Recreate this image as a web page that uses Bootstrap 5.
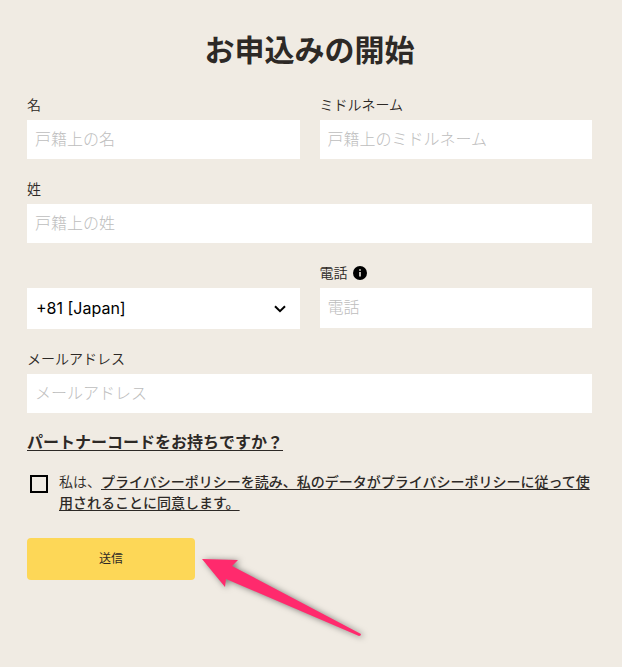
<!DOCTYPE html>
<html lang="ja">
<head>
<meta charset="utf-8">
<meta name="viewport" content="width=device-width, initial-scale=1">
<title>お申込みの開始</title>
<link href="https://cdn.jsdelivr.net/npm/bootstrap@5.3.0/dist/css/bootstrap.min.css" rel="stylesheet">
<style>
  body {
    background: #f0ebe3;
    color: #2d2926;
    font-family: "Noto Sans CJK JP", sans-serif;
    font-size: 14px;
    font-weight: 350;
    line-height: 20px;
  }
  .signup { padding: 30px 30px 80px 27px; }
  .signup h1 { font-size: 30px; line-height: 36px; margin-bottom: 29px; }
  .signup .row { --bs-gutter-x: 20px; --bs-gutter-y: 20px; }
  .form-label { display: flex; align-items: flex-start; gap: 5px; height: 20px; line-height: 18px; margin-bottom: 5px; }
  .signup .form-control, .signup .form-select {
    border: 0;
    border-radius: 0;
    background-color: #fff;
    font-size: 16px;
    font-weight: 300;
    line-height: 24px;
    height: 39px;
    padding: 5px 8px 9px;
  }
  .signup .form-control.tel { height: 40px; }
  .signup .form-control::placeholder { color: #bdbdbd; }
  .signup .form-select {
    height: 41px;
    padding: 7px 32px 9px 9px;
    color: #000;
    font-family: Inter, sans-serif;
    font-weight: 400;
    background-image: url("data:image/svg+xml,%3Csvg xmlns='http://www.w3.org/2000/svg' viewBox='0 0 12 8'%3E%3Cpath d='M1 1.2 6 6.2l5-5' fill='none' stroke='%23000' stroke-width='2'/%3E%3C/svg%3E");
    background-size: 12px 8px;
    background-position: right 14px center;
  }
  .info { width: 14px; height: 14px; border: 0; padding: 0; margin-top: 3px; background: none; display: flex; }
  .signup a { color: inherit; text-underline-offset: 2px; }
  .partner { font-size: 16px; line-height: 24px; margin: 16px 0 18px; }
  .consent { display: flex; gap: 11px; line-height: 21px; padding-left: 3px; margin-bottom: 25px; }
  .consent .form-check-input {
    width: 18px; height: 18px; margin: 4px 0 0;
    border: 2px solid #000; border-radius: 0; background-color: transparent; flex-shrink: 0;
  }
  .consent a { font-weight: 500; }
  .signup .send {
    width: 168px; height: 42px; padding: 0 0 2px;
    border: 0; border-radius: 4px;
    background: #fdd757; color: #2d2926;
    font-size: 12px;
  }
  .action { position: relative; }
  .pointer { position: absolute; left: 167px; top: 13px; overflow: visible; pointer-events: none; filter: drop-shadow(2px 1px 3px rgba(0,0,0,.5)); }
</style>
</head>
<body>
<main class="container-fluid signup min-vh-100">
  <h1 class="fw-bold text-center">お申込みの開始</h1>
  <form>
    <div class="row">
      <div class="col-6">
        <label class="form-label" for="first">名</label>
        <input class="form-control" id="first" type="text" placeholder="戸籍上の名">
      </div>
      <div class="col-6">
        <label class="form-label" for="middle">ミドルネーム</label>
        <input class="form-control" id="middle" type="text" placeholder="戸籍上のミドルネーム">
      </div>
      <div class="col-12">
        <label class="form-label" for="last">姓</label>
        <input class="form-control" id="last" type="text" placeholder="戸籍上の姓">
      </div>
      <div class="col-6">
        <div class="form-label"></div>
        <select class="form-select" id="country" aria-label="国番号"><option>+81 [Japan]</option></select>
      </div>
      <div class="col-6">
        <div class="form-label">
          <label for="tel">電話</label>
          <button class="info" type="button" aria-label="電話について">
            <svg width="14" height="14" viewBox="0 0 14 14" aria-hidden="true"><circle cx="7" cy="7" r="7"/><path d="M6.2 3.2h1.6v1.6H6.2zM6.2 5.9h1.6v4.7H6.2z" fill="#f0ebe3"/></svg>
          </button>
        </div>
        <input class="form-control tel" id="tel" type="tel" placeholder="電話">
      </div>
      <div class="col-12">
        <label class="form-label" for="email">メールアドレス</label>
        <input class="form-control" id="email" type="email" placeholder="メールアドレス">
      </div>
    </div>
    <p class="partner"><a class="fw-bold" href="#">パートナーコードをお持ちですか？</a></p>
    <div class="consent">
      <input class="form-check-input" type="checkbox" id="agree">
      <label for="agree">私は、<a href="#">プライバシーポリシーを読み、私のデータがプライバシーポリシーに従って使用されることに同意します。</a></label>
    </div>
    <div class="action">
      <button class="btn send" type="submit">送信</button>
      <svg class="pointer" width="168" height="84" viewBox="0 0 168 84" aria-hidden="true"><path d="M8 8 44 9l-6 6 129 68q0 2-2 2L32 28l-1 8z" fill="#ff2a6d"/></svg>
    </div>
  </form>
</main>
<script src="https://cdn.jsdelivr.net/npm/bootstrap@5.3.0/dist/js/bootstrap.bundle.min.js"></script>
</body>
</html>
